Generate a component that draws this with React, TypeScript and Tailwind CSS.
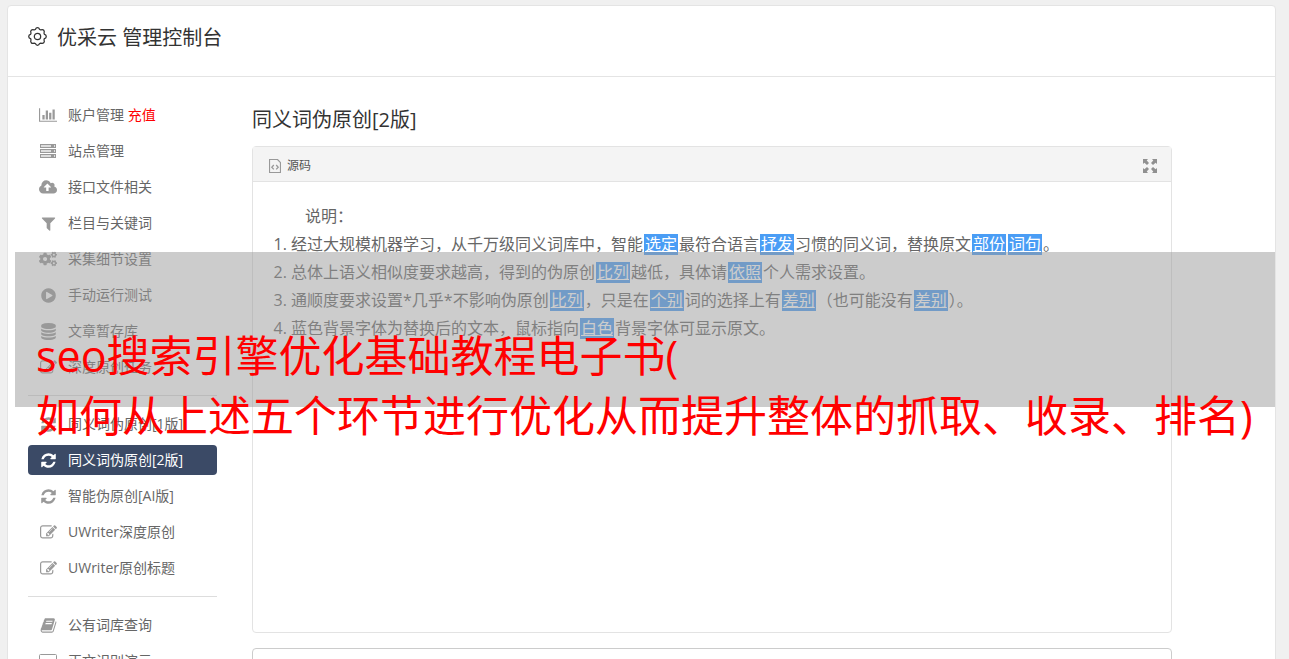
import clsx from 'clsx'
import { Fragment, type ReactNode } from 'react'
import { FaCogs } from 'react-icons/fa'

function Glyph({ d, viewBox = '0 0 1792 1792', className = 'size-[17px]' }: { d: string; viewBox?: string; className?: string }) {
	return (
		<svg aria-hidden viewBox={viewBox} className={className} fill="currentColor">
			<path d={d} />
		</svg>
	)
}

const REFRESH =
	'M1639 1056q0 5-1 7-64 268-268 434.5t-478 166.5q-146 0-282.5-55t-243.5-157l-129 129q-19 19-45 19t-45-19-19-45v-448q0-26 19-45t45-19h448q26 0 45 19t19 45-19 45l-137 137q71 66 161 102t187 36q134 0 250-65t186-179q11-17 53-117 8-23 30-23h192q13 0 22.5 9.5t9.5 22.5zm25-800v448q0 26-19 45t-45 19h-448q-26 0-45-19t-19-45 19-45l138-138q-148-137-349-137-134 0-250 65t-186 179q-11 17-53 117-8 23-30 23h-199q-13 0-22.5-9.5t-9.5-22.5v-7q65-268 270-434.5t480-166.5q146 0 284 55.5t245 156.5l130-129q19-19 45-19t45 19 19 45z'
const EDIT =
	'M888 1184l116-116-152-152-116 116v56h96v96h56zm440-720q-16-16-33 1l-350 350q-17 17-1 33t33-1l350-350q17-17 1-33zm80 594v190q0 119-84.5 203.5t-203.5 84.5h-832q-119 0-203.5-84.5t-84.5-203.5v-832q0-119 84.5-203.5t203.5-84.5h832q63 0 117 25 15 7 18 23 3 17-9 29l-49 49q-14 14-32 8-23-6-45-6h-832q-66 0-113 47t-47 113v832q0 66 47 113t113 47h832q66 0 113-47t47-113v-126q0-13 9-22l64-64q15-15 35-7t20 29zm-96-738l288 288-672 672h-288v-288zm444 132l-92 92-288-288 92-92q28-28 68-28t68 28l152 152q28 28 28 68t-28 68z'
const CHART =
	'M640 896v512h-256v-512h256zm384-512v1024h-256v-1024h256zm1024 1152v128h-2048v-1536h128v1408h1920zm-640-896v768h-256v-768h256zm384-384v1152h-256v-1152h256z'
const CLOUD =
	'M1216 864q0-14-9-23l-352-352q-9-9-23-9t-23 9l-351 351q-10 12-10 24 0 14 9 23t23 9h224v352q0 13 9.5 22.5t22.5 9.5h192q13 0 22.5-9.5t9.5-22.5v-352h224q13 0 22.5-9.5t9.5-22.5zm640 288q0 159-112.5 271.5t-271.5 112.5h-1088q-185 0-316.5-131.5t-131.5-316.5q0-130 70-240t188-165q-2-30-2-43 0-212 150-362t362-150q156 0 285.5 87t188.5 231q71-62 166-62 106 0 181 75t75 181q0 76-41 138 130 31 213.5 135.5t83.5 238.5z'
const FILTER =
	'M1595 295q17 41-14 70l-493 493v742q0 42-39 59-13 5-25 5-27 0-45-19l-256-256q-19-19-19-45v-486l-493-493q-31-29-14-70 17-39 59-39h1280q42 0 59 39z'
const PLAY =
	'M896 128q209 0 385.5 103t279.5 279.5 103 385.5-103 385.5-279.5 279.5-385.5 103-385.5-103-279.5-279.5-103-385.5 103-385.5 279.5-279.5 385.5-103zm384 823q32-18 32-55t-32-55l-544-320q-31-19-64-1-32 19-32 56v640q0 37 32 56 16 8 32 8 17 0 32-9z'
const DATABASE =
	'M896 768q237 0 443-43t325-127v170q0 69-103 128t-280 93.5-385 34.5-385-34.5-280-93.5-103-128v-170q119 84 325 127t443 43zm0 768q237 0 443-43t325-127v170q0 69-103 128t-280 93.5-385 34.5-385-34.5-280-93.5-103-128v-170q119 84 325 127t443 43zm0-384q237 0 443-43t325-127v170q0 69-103 128t-280 93.5-385 34.5-385-34.5-280-93.5-103-128v-170q119 84 325 127t443 43zm0-1152q208 0 385 34.5t280 93.5 103 128v128q0 69-103 128t-280 93.5-385 34.5-385-34.5-280-93.5-103-128v-128q0-69 103-128t280-93.5 385-34.5z'
const BOOK =
	'M1703 478q40 57 18 129l-275 906q-19 64-76.5 107.5t-122.5 43.5h-923q-77 0-148.5-53.5t-99.5-131.5q-24-67-2-127 0-4 3-27t4-37q1-8-3-21.5t-3-19.5q2-11 8-21t16.5-23.5 16.5-23.5q23-38 45-91.5t30-91.5q3-10 .5-30t-.5-28q3-11 17-28t17-23q21-36 42-92t25-90q1-9-2.5-32t.5-28q4-13 22-30.5t22-22.5q19-26 42.5-84.5t27.5-96.5q1-8-3-25.5t-2-26.5q2-8 9-18t18-23 17-21q8-12 16.5-30.5t15-35 16-36 19.5-32 26.5-23.5 36-11.5 47.5 5.5l-1 3q38-9 51-9h761q74 0 114 56t18 130l-274 906q-36 119-71.5 153.5t-128.5 34.5h-869q-27 0-38 15-11 16-1 43 24 70 144 70h923q29 0 56-15.5t35-41.5l300-987q7-22 5-57 38 15 59 43zm-1064 2q-4 13 2 22.5t20 9.5h608q13 0 25.5-9.5t16.5-22.5l21-64q4-13-2-22.5t-20-9.5h-608q-13 0-25.5 9.5t-16.5 22.5zm-83 256q-4 13 2 22.5t20 9.5h608q13 0 25.5-9.5t16.5-22.5l21-64q4-13-2-22.5t-20-9.5h-608q-13 0-25.5 9.5t-16.5 22.5z'

function ServerIcon() {
	return (
		<svg aria-hidden viewBox="0 0 16 14" className="h-3.5 w-4" fill="none" stroke="currentColor">
			{[0, 5, 10].map((y) => (
				<Fragment key={y}>
					<rect x="0.5" y={y + 0.5} width="15" height="3" fill="#ddd" />
					<path d={`M11 ${y + 2}h3`} strokeWidth="2" />
				</Fragment>
			))}
		</svg>
	)
}

function MonitorIcon() {
	return (
		<svg aria-hidden viewBox="0 0 18 16" className="h-4 w-[18px]" fill="none" stroke="currentColor">
			<rect x="0.5" y="1.5" width="17" height="10" rx="1" />
			<path d="M5 14.5h8" />
		</svg>
	)
}

function GearIcon() {
	return (
		<svg aria-hidden viewBox="0 0 18 18" className="size-[19px]" fill="none" stroke="currentColor" strokeWidth="1.2" strokeLinejoin="round">
			<circle cx="9" cy="9" r="3" />
			<path d="M7 2.3Q7.600.7 9 .7T11 2.300Q11.500 2.900 12.300 2.800 14 2.100 14.900 3.100T15.200 5.700Q15.100 6.500 15.700 7 17.300 7.600 17.300 9T15.700 11Q15.100 11.500 15.200 12.300 15.900 14 14.900 14.900T12.300 15.200Q11.500 15.100 11 15.700 10.400 17.300 9 17.300T7 15.700Q6.500 15.100 5.700 15.200 4 15.900 3.100 14.900T2.800 12.300Q2.900 11.500 2.300 11 .7 10.400.7 9T2.300 7Q2.900 6.500 2.800 5.700 2.100 4 3.100 3.100T5.700 2.800Q6.500 2.900 7 2.300z" />
		</svg>
	)
}

function SourceIcon() {
	return (
		<svg aria-hidden viewBox="0 0 12 14" className="h-3.5 w-3" fill="none" stroke="currentColor">
			<path d="M.5.5h8l3 3v10H.5z" strokeWidth="1.2" />
			<path d="M4.800 6 2.800 8.200l2 2.200M7.200 6l2 2.200-2 2.200" strokeWidth="1.3" />
		</svg>
	)
}

function ExpandIcon() {
	return (
		<svg aria-hidden viewBox="0 0 14 14" className="size-3.5" fill="currentColor">
			<path d="M0 0h5L3.700 1.400 6 3.900 4 6 1.400 3.700 0 5zM14 0v5l-1.400-1.300L10 6 8 3.900l2.300-2.500L9 0zM0 14V9l1.400 1.300L4 8l2 2.100-2.300 2.500L5 14zM14 14H9l1.300-1.400L8 10.100 10 8l2.600 2.300L14 9z" />
		</svg>
	)
}

type MenuItem = { label: string; icon: ReactNode; extra?: string; active?: boolean }

const menu: MenuItem[][] = [
	[
		{ label: '账户管理', extra: '充值', icon: <Glyph d={CHART} viewBox="0 0 2048 1792" className="h-4 w-[18px]" /> },
		{ label: '站点管理', icon: <ServerIcon /> },
		{ label: '接口文件相关', icon: <Glyph d={CLOUD} viewBox="-64 0 1920 1792" className="h-[17px] w-[18px]" /> },
		{ label: '栏目与关键词', icon: <Glyph d={FILTER} /> },
		{ label: '采集细节设置', icon: <FaCogs className="size-[18px]" /> },
		{ label: '手动运行测试', icon: <Glyph d={PLAY} /> },
		{ label: '文章暂存库', icon: <Glyph d={DATABASE} /> },
		{ label: '深度原创任务', icon: <Glyph d={EDIT} /> },
	],
	[
		{ label: '同义词伪原创[1版]', icon: <Glyph d={REFRESH} /> },
		{ label: '同义词伪原创[2版]', icon: <Glyph d={REFRESH} />, active: true },
		{ label: '智能伪原创[AI版]', icon: <Glyph d={REFRESH} /> },
		{ label: 'UWriter深度原创', icon: <Glyph d={EDIT} /> },
		{ label: 'UWriter原创标题', icon: <Glyph d={EDIT} /> },
	],
	[
		{ label: '公有词库查询', icon: <Glyph d={BOOK} /> },
		{ label: '正文识别演示', icon: <MonitorIcon /> },
	],
]

function Sidebar() {
	return (
		<nav className="w-[189px] shrink-0 text-sm">
			{menu.map((group, i) => (
				<Fragment key={i}>
					{i > 0 && <hr className="my-[13px] border-[#ddd]" />}
					<ul className="flex flex-col gap-1.5">
						{group.map((item) => (
							<li key={item.label}>
								<a
									href="#"
									className={clsx(
										'flex h-[30px] items-center gap-2.5 rounded px-2.5 whitespace-nowrap',
										item.active ? 'bg-[#3b4a66] text-white' : 'text-[#666]'
									)}
								>
									<span className={clsx('flex w-5 shrink-0 justify-center', !item.active && 'text-[#999]')}>{item.icon}</span>
									<span>
										{item.label}
										{item.extra && <span className="text-[#f00]"> {item.extra}</span>}
									</span>
								</a>
							</li>
						))}
					</ul>
				</Fragment>
			))}
		</nav>
	)
}

// A word that was swapped for a synonym
function Swap({ children }: { children: ReactNode }) {
	return (
		<a href="#" className="mx-px inline-block bg-[#4a9df5] px-px leading-[21px] text-white underline">
			{children}
		</a>
	)
}

function SourcePanel() {
	return (
		<section className="h-[487px] rounded border border-[#e3e3e3]">
			<div className="flex h-[35px] items-center justify-between border-b border-[#e3e3e3] bg-[#f4f4f4] pt-1 pr-3.5 pl-4 text-xs text-[#555]">
				<button type="button" className="flex items-center gap-1.5">
					<span className="text-[#999]">
						<SourceIcon />
					</span>
					源码
				</button>
				<button type="button" aria-label="全屏" className="text-[#909090]">
					<ExpandIcon />
				</button>
			</div>
			<div className="p-5 text-base leading-7 text-[#666]">
				<p className="indent-8">说明：</p>
				<ol className="list-decimal pl-[18px]">
					<li>
						经过大规模机器学习，从千万级同义词库中，智能<Swap>选定</Swap>最符合语言<Swap>抒发</Swap>习惯的同义词，替换原文
						<Swap>部份</Swap>
						<Swap>词句</Swap>。
					</li>
					<li>
						总体上语义相似度要求越高，得到的伪原创<Swap>比列</Swap>越低，具体请<Swap>依照</Swap>个人需求设置。
					</li>
					<li>
						通顺度要求设置*几乎*不影响伪原创<Swap>比列</Swap>，只是在<Swap>个别</Swap>词的选择上有<Swap>差别</Swap>（也可能没有
						<Swap>差别</Swap>）。
					</li>
					<li>
						蓝色背景字体为替换后的文本，鼠标指向<Swap>白色</Swap>背景字体可显示原文。
					</li>
				</ol>
			</div>
		</section>
	)
}

export default function App() {
	return (
		<div
			lang="zh-CN"
			className="relative h-screen overflow-hidden bg-[#f0f0f0] pt-[5px] pr-[13px] pl-[7px] font-['Open_Sans','Noto_Sans_CJK_SC',sans-serif]"
		>
			<div className="h-[900px] rounded border border-[#e4e4e4] bg-white">
				<header className="flex h-[71px] items-start gap-2.5 border-b border-[#e4e4e4] px-5 pt-4 text-[#333]">
					<span className="flex h-7 items-center">
						<GearIcon />
					</span>
					<h1 className="text-xl leading-8">优采云 管理控制台</h1>
				</header>
				<div className="flex gap-[35px] pt-[23px] pr-[103px] pl-5">
					<Sidebar />
					<main className="min-w-0 flex-1">
						<h2 className="mt-1 mb-2.5 text-xl leading-8 text-[#333]">同义词伪原创[2版]</h2>
						<SourcePanel />
						<textarea aria-label="替换结果" className="mt-[15px] block h-40 w-full resize-none rounded border border-[#ccc] p-3" />
					</main>
				</div>
			</div>
			<div className="absolute top-[252px] right-3.5 left-[15px] h-[155px] bg-[#999]/50 pt-[74px] pl-[21px] text-[43px] leading-[60px] whitespace-nowrap text-[#f00]">
				<p>seo搜索引擎优化基础教程电子书(</p>
				<p>如何从上述五个环节进行优化从而提升整体的抓取、收录、排名)</p>
			</div>
		</div>
	)
}
